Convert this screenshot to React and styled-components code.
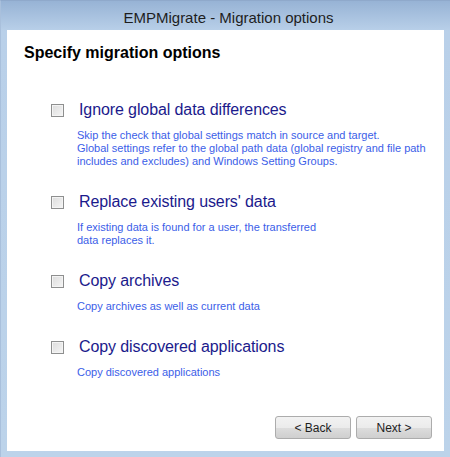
import styled, { createGlobalStyle } from 'styled-components';

const GlobalStyle = createGlobalStyle`
  html, body {
    margin: 0;
    padding: 0;
    background: #bcd3ea;
  }
  * {
    box-sizing: border-box;
  }
`;

const Window = styled.div`
  width: 450px;
  height: 457px;
  display: flex;
  flex-direction: column;
  background: linear-gradient(to bottom, #97b3d5 0px, #b9d0e9 30px, #bcd3ea 100%);
  font-family: 'Liberation Sans', Arial, sans-serif;
  border-left: 1px solid #a9c0dc;
  border-top: 1px solid #8fa9cb;
`;

const TitleBar = styled.div`
  height: 29px;
  display: flex;
  align-items: center;
  justify-content: center;
  padding: 3px 0 0 6px;
  font-size: 15px;
  color: #1e1e1e;
`;

const Content = styled.div`
  flex: 1;
  margin: 0 6px 6px 6px;
  background: #fff;
  display: flex;
  flex-direction: column;
  padding: 13px 12px 12px 17px;
`;

const Heading = styled.h1`
  margin: 0;
  font-size: 16px;
  line-height: 20px;
  font-weight: bold;
  color: #000;
`;

const OptionList = styled.div`
  display: flex;
  flex-direction: column;
  gap: 24px;
  margin-top: 37px;
  padding-left: 27px;
`;

const Option = styled.div`
  display: grid;
  grid-template-columns: 28px 1fr;
  row-gap: 9px;
  align-items: center;
`;

const Checkbox = styled.span`
  width: 13px;
  height: 13px;
  border: 1px solid #8e8f8f;
  background: linear-gradient(135deg, #dcdcdc, #f5f5f5);
  box-shadow: inset 0 0 0 1px #f4f4f4;
  display: block;
`;

const Label = styled.div`
  font-size: 16px;
  line-height: 20px;
  color: #1b1a8c;
  letter-spacing: -0.1px;
`;

const Description = styled.div`
  grid-column: 2;
  margin-left: -2px;
  font-size: 11px;
  line-height: 13px;
  color: #3b5ee8;
`;

const Footer = styled.div`
  margin-top: auto;
  display: flex;
  justify-content: flex-end;
  gap: 5px;
`;

const Button = styled.button`
  width: 76px;
  height: 23px;
  border: 1px solid #acacac;
  border-radius: 3px;
  background: linear-gradient(to bottom, #f2f2f2 0%, #ebebeb 50%, #dddddd 51%, #cfcfcf 100%);
  font-family: 'Liberation Sans', Arial, sans-serif;
  font-size: 12px;
  color: #1e1e1e;
  padding: 0;
`;

const options = [
  {
    label: 'Ignore global data differences',
    desc: [
      'Skip the check that global settings match in source and target.',
      'Global settings refer to the global path data (global registry and file path',
      'includes and excludes) and Windows Setting Groups.',
    ],
  },
  {
    label: "Replace existing users' data",
    desc: ['If existing data is found for a user, the transferred', 'data replaces it.'],
  },
  { label: 'Copy archives', desc: ['Copy archives as well as current data'] },
  { label: 'Copy discovered applications', desc: ['Copy discovered applications'] },
];

export default function App() {
  return (
    <>
      <GlobalStyle />
      <Window>
        <TitleBar>EMPMigrate - Migration options</TitleBar>
        <Content>
          <Heading>Specify migration options</Heading>
          <OptionList>
            {options.map((o) => (
              <Option key={o.label}>
                <Checkbox />
                <Label>{o.label}</Label>
                <Description>
                  {o.desc.map((line) => (
                    <div key={line}>{line}</div>
                  ))}
                </Description>
              </Option>
            ))}
          </OptionList>
          <Footer>
            <Button>&lt; Back</Button>
            <Button>Next &gt;</Button>
          </Footer>
        </Content>
      </Window>
    </>
  );
}
